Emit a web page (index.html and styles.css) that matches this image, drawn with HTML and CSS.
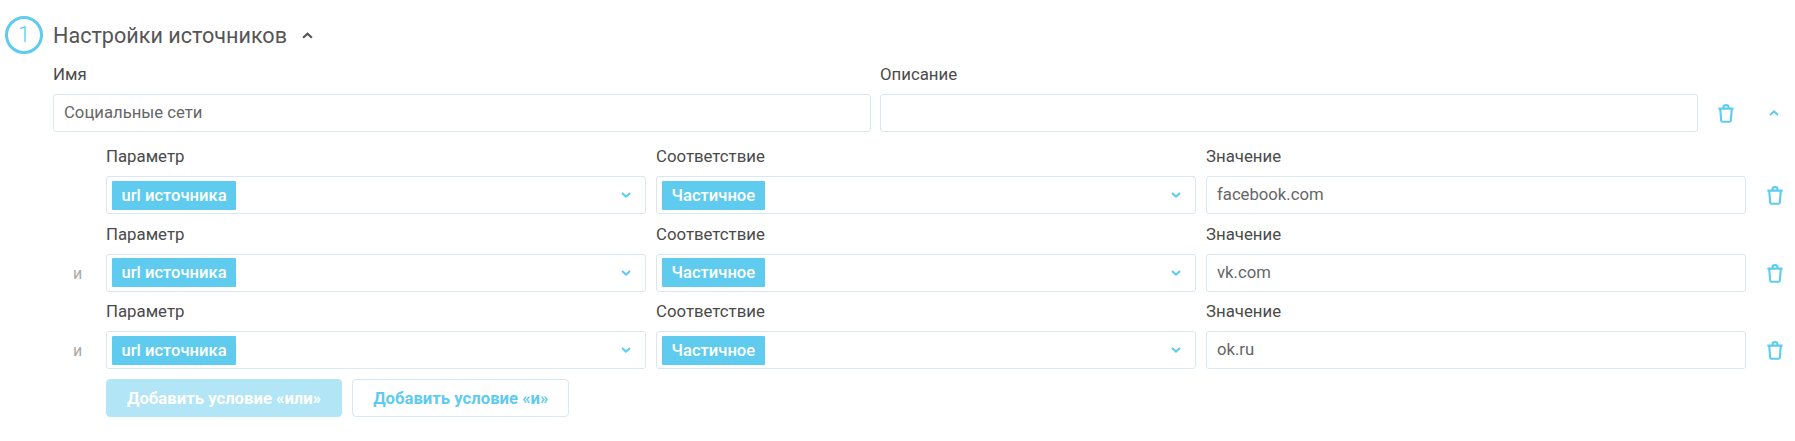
FILE: index.html
```html
<!DOCTYPE html>
<html>
<head>
    <title>Настройки источников</title>
    <link rel="stylesheet" href="styles.css">
</head>
<body>
    <svg class="icon-defs" width="0" height="0">
        <symbol id="trash" viewBox="0 0 16 19">
            <path d="M0.4 4.6H15.6M2.2 4.6L3.2 16.6C3.3 17.4 3.7 17.8 4.4 17.8H11.6C12.3 17.8 12.7 17.4 12.8 16.6L13.8 4.6M5.6 4.4V2.6C5.6 1.6 6.6 1.1 8 1.1S10.4 1.6 10.4 2.6V4.4" fill="none" stroke="currentColor" stroke-width="2.1"/>
        </symbol>
        <symbol id="chevron" viewBox="0 0 10 6">
            <path d="M1 1L5 4.6L9 1" fill="none" stroke="currentColor" stroke-width="2"/>
        </symbol>
    </svg>

    <div class="section">
        <div class="section-head">
            <div class="step-num">1</div>
            <h2>Настройки источников</h2>
            <svg class="head-arrow"><use href="#chevron"/></svg>
        </div>

        <div class="source-row">
            <div class="field">
                <label>Имя</label>
                <input class="text-input" type="text" value="Социальные сети">
            </div>
            <div class="field">
                <label>Описание</label>
                <input class="text-input" type="text" value="">
            </div>
            <svg class="trash"><use href="#trash"/></svg>
            <svg class="row-arrow"><use href="#chevron"/></svg>
        </div>

        <div class="condition">
            <div class="conj"></div>
            <div class="field">
                <label>Параметр</label>
                <div class="select"><span class="tag">url источника</span><svg class="select-arrow"><use href="#chevron"/></svg></div>
            </div>
            <div class="field">
                <label>Соответствие</label>
                <div class="select"><span class="tag">Частичное</span><svg class="select-arrow"><use href="#chevron"/></svg></div>
            </div>
            <div class="field">
                <label>Значение</label>
                <input class="text-input" type="text" value="facebook.com">
            </div>
            <svg class="trash"><use href="#trash"/></svg>
        </div>

        <div class="condition">
            <div class="conj">и</div>
            <div class="field">
                <label>Параметр</label>
                <div class="select"><span class="tag">url источника</span><svg class="select-arrow"><use href="#chevron"/></svg></div>
            </div>
            <div class="field">
                <label>Соответствие</label>
                <div class="select"><span class="tag">Частичное</span><svg class="select-arrow"><use href="#chevron"/></svg></div>
            </div>
            <div class="field">
                <label>Значение</label>
                <input class="text-input" type="text" value="vk.com">
            </div>
            <svg class="trash"><use href="#trash"/></svg>
        </div>

        <div class="condition">
            <div class="conj">и</div>
            <div class="field">
                <label>Параметр</label>
                <div class="select"><span class="tag">url источника</span><svg class="select-arrow"><use href="#chevron"/></svg></div>
            </div>
            <div class="field">
                <label>Соответствие</label>
                <div class="select"><span class="tag">Частичное</span><svg class="select-arrow"><use href="#chevron"/></svg></div>
            </div>
            <div class="field">
                <label>Значение</label>
                <input class="text-input" type="text" value="ok.ru">
            </div>
            <svg class="trash"><use href="#trash"/></svg>
        </div>

        <div class="actions">
            <button class="btn btn-primary" type="button">Добавить условие «или»</button>
            <button class="btn" type="button">Добавить условие «и»</button>
        </div>
    </div>
</body>
</html>
```

FILE: styles.css
```css
body {
    margin: 0;
    font-family: Roboto, "Noto Sans", sans-serif;
    color: #555;
    background-color: white;
}
.icon-defs {
    display: block;
    height: 0;
}
.section {
    padding: 16px 12px 0 5px;
}
.section-head {
    display: flex;
    align-items: center;
    height: 38px;
}
.step-num {
    box-sizing: border-box;
    width: 38px;
    height: 38px;
    border: 3px solid #5ecbef;
    border-radius: 50%;
    color: #5ecbef;
    font-size: 22px;
    font-weight: 300;
    line-height: 31px;
    text-align: center;
}
h2 {
    margin: 0 0 0 10px;
    font-size: 21.6px;
    font-weight: 400;
    color: #555;
}
.head-arrow {
    width: 11px;
    height: 7px;
    margin-left: 15px;
    color: #555;
    transform: rotate(180deg);
}
.source-row {
    display: flex;
    align-items: flex-end;
    margin-left: 48px;
    margin-top: 10px;
    gap: 9px;
}
.source-row .field {
    width: 818px;
}
.condition {
    display: flex;
    align-items: flex-end;
    margin-left: 48px;
    margin-top: 14px;
    gap: 10px;
}
.condition + .condition {
    margin-top: 9.5px;
}
.condition .field {
    width: 540px;
}
.conj {
    height: 38px;
    padding-left: 20px;
    margin-right: -10px;
    width: 33px;
    font-size: 16px;
    line-height: 40px;
    color: #aaa;
}
.field label {
    display: block;
    height: 20px;
    margin-bottom: 10px;
    font-size: 16.8px;
    font-weight: 400;
    line-height: 20px;
    color: #4a4a4a;
}
.text-input {
    display: block;
    box-sizing: border-box;
    width: 100%;
    height: 38px;
    padding: 0 10px 1px;
    border: 1px solid #d9e8f0;
    border-radius: 3px;
    outline: none;
    font-family: inherit;
    font-size: 16.7px;
    color: #666;
}
.select {
    display: flex;
    align-items: center;
    justify-content: space-between;
    box-sizing: border-box;
    height: 38px;
    padding: 0 14px 0 5px;
    border: 1px solid #d9e8f0;
    border-radius: 3px;
}
.tag {
    height: 29px;
    padding: 0 9.5px;
    border-radius: 1px;
    background-color: #5ecbef;
    color: white;
    font-size: 16.6px;
    font-weight: 500;
    line-height: 29px;
}
.select-arrow {
    width: 10px;
    height: 6px;
    color: #5ecbef;
}
.trash {
    flex: none;
    width: 16px;
    height: 19px;
    margin: 0 0 9px 11px;
    color: #5ecbef;
}
.row-arrow {
    flex: none;
    width: 10px;
    height: 6px;
    margin: 0 0 16px 26px;
    color: #5ecbef;
    transform: rotate(180deg);
}
.actions {
    display: flex;
    gap: 10px;
    margin: 10px 0 0 101px;
}
.btn {
    height: 38px;
    padding: 0 20px;
    border: 1px solid #d9e8f0;
    border-radius: 4px;
    background-color: white;
    color: #5ecbef;
    font-family: inherit;
    font-size: 16.7px;
    font-weight: 700;
}
.btn-primary {
    background-color: #b2e5f6;
    border-color: #b2e5f6;
    color: white;
}
```
